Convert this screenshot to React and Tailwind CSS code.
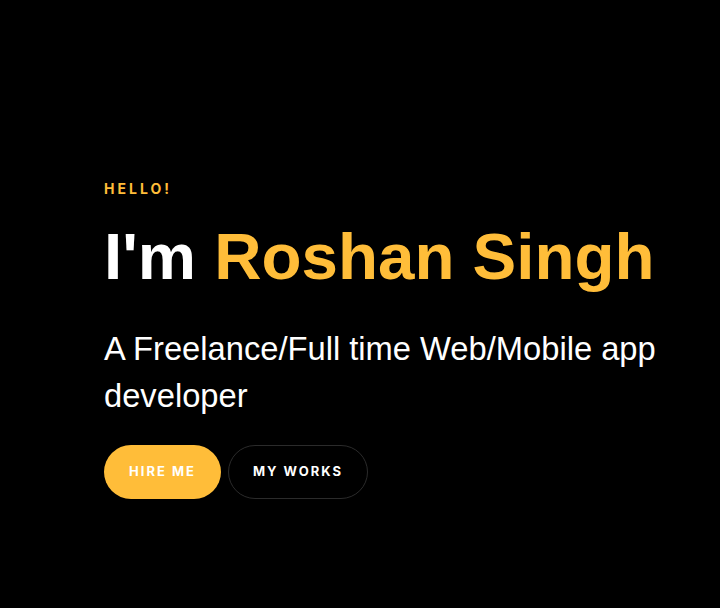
export default function App() {
  return (
    <div className="min-h-[608px] w-full bg-black font-['Liberation_Sans',Arial,sans-serif]">
      <div className="pt-[182px] pl-[104px] pr-6 w-full">
        {/* Intro */}
        <span className="block text-[#ffbd39] font-['Inter',sans-serif] font-bold text-[14px] tracking-[3px] uppercase leading-none">
          Hello!
        </span>
        <h1 className="mt-[28px] text-white font-bold text-[65.5px] leading-none whitespace-nowrap">
          I'm <span className="text-[#ffbd39]">Roshan Singh</span>
        </h1>
        <h2 className="mt-[35px] text-white text-[32.7px] leading-[47px] max-w-[580px]">
          A Freelance/Full time Web/Mobile app developer
        </h2>

        {/* Actions */}
        <div className="mt-[26px] flex gap-[7px] font-['Inter',sans-serif]">
          <a
            href="#"
            className="h-[54px] w-[117px] justify-center rounded-full bg-[#ffbd39] text-white text-[13px] font-bold tracking-[2px] uppercase flex items-center"
          >
            Hire me
          </a>
          <a
            href="#"
            className="h-[54px] w-[140px] justify-center rounded-full border border-[#2b2b2b] text-white text-[13px] font-bold tracking-[2px] uppercase flex items-center"
          >
            My works
          </a>
        </div>
      </div>
    </div>
  );
}
